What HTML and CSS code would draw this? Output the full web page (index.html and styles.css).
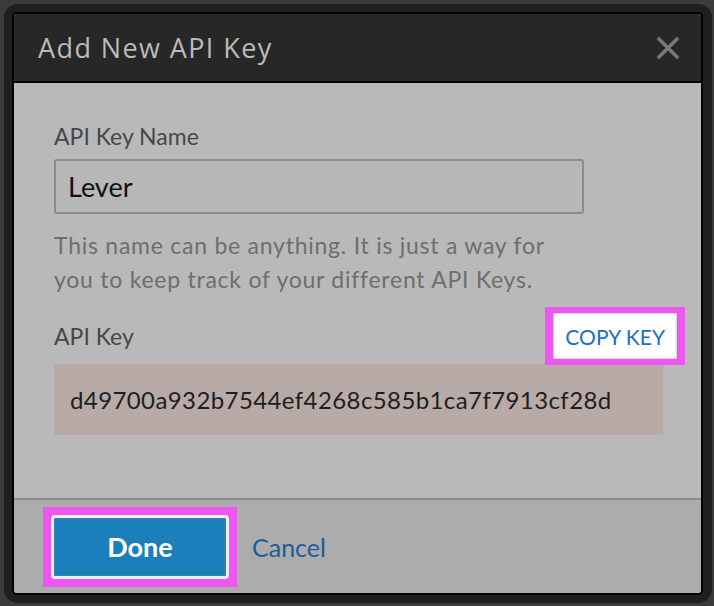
FILE: index.html
```html
<!doctype html>
<html>
    <head>
        <title>Add New API Key</title>
        <meta charset="utf-8">
        <link rel="stylesheet" href="styles.css">
    </head>
    <body>
        <div class="frame">
            <div class="dialog">
                <header class="dialog-head">
                    <h1>Add New API Key</h1>
                    <button class="close" title="Close">
                        <svg width="22" height="22" viewBox="0 0 22 22">
                            <path d="M2 2 L20 20 M20 2 L2 20" stroke="#7a7a7a" stroke-width="3.6" stroke-linecap="round"/>
                        </svg>
                    </button>
                </header>

                <section class="dialog-body">
                    <label class="field-label" for="key-name">API Key Name</label>
                    <input id="key-name" class="text-input" type="text" value="Lever">
                    <p class="hint">This name can be anything. It is just a way for you to keep track of your different API Keys.</p>

                    <div class="key-row">
                        <span class="field-label">API Key</span>
                        <span class="mark mark-small"><button class="copy">COPY KEY</button></span>
                    </div>
                    <div class="key-box">d49700a932b7544ef4268c585b1ca7f7913cf28d</div>
                </section>

                <footer class="dialog-foot">
                    <span class="mark"><button class="primary">Done</button></span>
                    <a class="cancel" href="#">Cancel</a>
                </footer>
            </div>
        </div>
    </body>
</html>
```

FILE: styles.css
```css
html, body {
    margin: 0;
    height: 100%;
    background: #3b3b3b;
}

body {
    font-family: Lato, "Open Sans", sans-serif;
    padding: 4px 2px 3px 4px;
    box-sizing: border-box;
}

.frame {
    background: #1f1f1f;
    border-radius: 14px;
    padding: 8px 9px 8px 8px;
    height: 100%;
    box-sizing: border-box;
}

.dialog {
    border: 2px solid #000;
    border-radius: 5px;
    overflow: hidden;
    height: 100%;
    box-sizing: border-box;
    display: flex;
    flex-direction: column;
    background: #b9b9b9;
}

.dialog-head {
    background: #272727;
    border-bottom: 2px solid #000;
    height: 67px;
    display: flex;
    align-items: center;
    justify-content: space-between;
    padding: 0 22px 0 24px;
}

.dialog-head h1 {
    margin: 0;
    font-family: "Open Sans", sans-serif;
    font-size: 27px;
    font-weight: normal;
    color: #bababa;
    letter-spacing: 1.4px;
}

.close {
    background: none;
    border: 0;
    padding: 0;
    display: flex;
}

.dialog-body {
    flex-grow: 1;
    padding: 38px 38px 0 40px;
}

.field-label {
    display: block;
    font-size: 23px;
    color: #474747;
    line-height: 30px;
}

.text-input {
    display: block;
    box-sizing: border-box;
    width: 530px;
    height: 55px;
    margin-top: 8px;
    padding: 0 12px;
    border: 2px solid #8c8c8c;
    border-radius: 3px;
    background: #b7b7b7;
    font-family: inherit;
    font-size: 27px;
    color: #111;
}

.hint {
    margin: 14px 0 0;
    max-width: 505px;
    font-size: 23px;
    letter-spacing: 0.75px;
    line-height: 34px;
    color: #6e6e6e;
}

.key-row {
    display: flex;
    align-items: center;
    justify-content: space-between;
    margin-top: 11px;
    margin-right: -22px;
}

.mark {
    display: inline-block;
    background: #ec57f2;
    padding: 8px;
}

.mark-small {
    padding: 6px 8px;
}

.copy {
    display: block;
    background: #fff;
    border: 0;
    box-shadow: inset 0 0 3px #999;
    padding: 0 12px;
    height: 46px;
    font-family: inherit;
    font-size: 21px;
    color: #1d6fc0;
}

.key-box {
    margin-top: -1px;
    background: #b8aaa6;
    height: 71px;
    display: flex;
    align-items: center;
    padding: 0 16px;
    font-size: 24px;
    letter-spacing: 0.4px;
    color: #1e1e1e;
}

.dialog-foot {
    background: #acacac;
    border-top: 2px solid #8c8c8c;
    height: 95px;
    box-sizing: border-box;
    display: flex;
    align-items: center;
    padding-left: 29px;
    gap: 15px;
}

.primary {
    display: block;
    width: 178px;
    height: 64px;
    border: 3px solid #ededed;
    box-shadow: 0 0 2px #888 inset;
    border-radius: 4px;
    background: #1b7fbb;
    font-family: inherit;
    font-size: 27px;
    font-weight: bold;
    color: #fff;
    padding: 0;
}

.cancel {
    font-size: 25px;
    color: #1e5c95;
    text-decoration: none;
}
```
